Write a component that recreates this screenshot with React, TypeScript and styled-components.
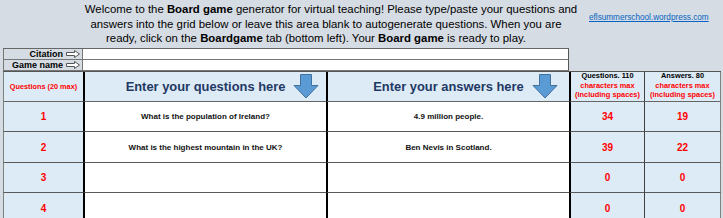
import React from "react";
import styled, { createGlobalStyle } from "styled-components";

const GlobalStyle = createGlobalStyle`
  html, body {
    margin: 0;
    padding: 0;
  }
  body {
    background: #d6dce4;
    font-family: "Liberation Sans", Arial, sans-serif;
    overflow: hidden;
  }
`;

type Row = { n: number; q: string; a: string; qc: number; ac: number };

const rows: Row[] = [
  { n: 1, q: "What is the population of Ireland?", a: "4.9 million people.", qc: 34, ac: 19 },
  { n: 2, q: "What is the highest mountain in the UK?", a: "Ben Nevis in Scotland.", qc: 39, ac: 22 },
  { n: 3, q: "", a: "", qc: 0, ac: 0 },
  { n: 4, q: "", a: "", qc: 0, ac: 0 },
];

const RightArrow = () => (
  <svg width="14" height="8" viewBox="0 0 14 8">
    <path d="M0.5 2.5 H8.5 V0.5 L13.5 4 L8.5 7.5 V5.5 H0.5 Z" fill="#ffffff" stroke="#555" strokeWidth="1" />
  </svg>
);

const DownArrow = () => (
  <svg width="26" height="25" viewBox="0 0 26 25">
    <path d="M7.5 0.5 H18.5 V11.5 H25 L13 24 L1 11.5 H7.5 Z" fill="#5b9bd5" stroke="#41719c" strokeWidth="1" />
  </svg>
);

const App = () => {
  return (
    <Page>
      <GlobalStyle />
      <Intro>
        <Message>
          <Line $shift={5}>
            Welcome to the&nbsp;<b>Board game</b>&nbsp;generator for virtual teaching! Please type/paste your questions and
          </Line>
          <Line>answers into the grid below or leave this area blank to autogenerate questions. When you are</Line>
          <Line $shift={-10}>
            ready, click on the&nbsp;<b>Boardgame</b>&nbsp;tab (bottom left). Your&nbsp;<b>Board game</b>&nbsp;is ready to play.
          </Line>
        </Message>
        <SiteLink href="#">eflsummerschool.wordpress.com</SiteLink>
      </Intro>

      <Meta>
        <MetaLabel>
          Citation <RightArrow />
        </MetaLabel>
        <MetaInput />
        <MetaLabel>
          Game name <RightArrow />
        </MetaLabel>
        <MetaInput />
      </Meta>

      <Grid>
        <HeadCell $col={1}>
          <SmallRed>Questions (20 max)</SmallRed>
        </HeadCell>
        <HeadCell $col={2}>
          <Title>Enter your questions here</Title>
          <ArrowSpot $right={7}>
            <DownArrow />
          </ArrowSpot>
        </HeadCell>
        <HeadCell $col={3}>
          <Title>Enter your answers here</Title>
          <ArrowSpot $right={11}>
            <DownArrow />
          </ArrowSpot>
        </HeadCell>
        <HeadCell $col={4}>
          <CountHead>
            <b>Questions. 110</b>
            <Red>characters max</Red>
            <Red>(including spaces)</Red>
          </CountHead>
        </HeadCell>
        <HeadCell $col={5}>
          <CountHead>
            <b>Answers. 80</b>
            <Red>characters max</Red>
            <Red>(including spaces)</Red>
          </CountHead>
        </HeadCell>

        {rows.map((r, i) => (
          <React.Fragment key={r.n}>
            <Cell $col={1} $tall={i % 2 === 1}>
              <Num>{r.n}</Num>
            </Cell>
            <Cell $col={2} $tall={i % 2 === 1}>
              <Entry>{r.q}</Entry>
            </Cell>
            <Cell $col={3} $tall={i % 2 === 1}>
              <Entry>{r.a}</Entry>
            </Cell>
            <Cell $col={4} $tall={i % 2 === 1}>
              <Num>{r.qc}</Num>
            </Cell>
            <Cell $col={5} $tall={i % 2 === 1}>
              <Num>{r.ac}</Num>
            </Cell>
          </React.Fragment>
        ))}
      </Grid>
    </Page>
  );
};

export default App;

// =================================================================

const Page = styled.div`
  width: 723px;
  height: 218px;
  overflow: hidden;
  background: #d6dce4;
`;

const Intro = styled.div`
  display: grid;
  grid-template-columns: 83px 486px 1fr;
  height: 48px;
`;

const Message = styled.div`
  grid-column: 2;
  padding-top: 2px;
  font-size: 11.4px;
  line-height: 14.7px;
  color: #000;
`;

// shift moves the centre of a line sideways, as the sheet's own wrapping does
const Line = styled.div<{ $shift?: number }>`
  display: flex;
  justify-content: center;
  white-space: nowrap;
  padding-left: ${(p) => Math.max(0, (p.$shift ?? 0) * 2)}px;
  padding-right: ${(p) => Math.max(0, -(p.$shift ?? 0) * 2)}px;
`;

const SiteLink = styled.a`
  grid-column: 3;
  align-self: start;
  justify-self: start;
  margin: 13px 0 0 20px;
  font-size: 8.2px;
  color: #0563c1;
  text-decoration: underline;
`;

const Meta = styled.div`
  display: grid;
  grid-template-columns: 80px 486px;
  grid-auto-rows: 11px;
  width: 566px;
  margin-left: 3px;
  border-top: 1px solid #666;
  box-sizing: border-box;
`;

const MetaLabel = styled.div`
  display: flex;
  align-items: center;
  justify-content: flex-end;
  gap: 3px;
  padding-right: 2px;
  box-sizing: border-box;
  border-left: 1px solid #777;
  border-right: 1px solid #777;
  border-bottom: 1px solid #777;
  font-size: 9px;
  font-weight: bold;
  color: #000;
  line-height: 1;
`;

const MetaInput = styled.div`
  background: #fff;
  box-sizing: border-box;
  border-right: 1px solid #555;
  border-bottom: 1px solid #777;
`;

const Grid = styled.div`
  display: grid;
  grid-template-columns: 80px 243px 243px 75px 77px;
  margin-left: 3px;
  border-top: 1px solid #555;
  width: 718px;
`;

const colBorder = (col: number) => {
  switch (col) {
    case 1:
      return "border-left: 1px solid #808080;";
    case 5:
      return "border-left: 1px solid #404040; border-right: 1px solid #808080;";
    default:
      return "border-left: 2px solid #000;";
  }
};

const HeadCell = styled.div<{ $col: number }>`
  position: relative;
  display: flex;
  align-items: center;
  justify-content: center;
  height: 30px;
  box-sizing: border-box;
  background: #ddebf7;
  border-bottom: 1px solid #666;
  ${(p) => colBorder(p.$col)}
`;

const Cell = styled.div<{ $col: number; $tall?: boolean }>`
  display: flex;
  align-items: center;
  justify-content: center;
  height: ${(p) => (p.$tall ? 31 : 30)}px;
  box-sizing: border-box;
  background: ${(p) => (p.$col === 2 || p.$col === 3 ? "#ffffff" : "#ddebf7")};
  border-bottom: 1px solid #595959;
  ${(p) => colBorder(p.$col)}
`;

const SmallRed = styled.span`
  font-size: 7.3px;
  font-weight: bold;
  color: #ff0000;
  white-space: nowrap;
`;

const Title = styled.span`
  font-size: 12.9px;
  font-weight: bold;
  color: #1f3864;
  white-space: nowrap;
`;

const ArrowSpot = styled.span<{ $right: number }>`
  position: absolute;
  top: 2px;
  right: ${(p) => p.$right}px;
  display: flex;
`;

const CountHead = styled.div`
  display: flex;
  flex-direction: column;
  align-items: center;
  padding-bottom: 2px;
  font-size: 7.4px;
  line-height: 9.5px;
  font-weight: bold;
  color: #000;
  white-space: nowrap;
`;

const Red = styled.span`
  color: #ff0000;
`;

const Num = styled.span`
  font-size: 10px;
  font-weight: bold;
  color: #ff0000;
`;

const Entry = styled.span`
  font-size: 8px;
  font-weight: bold;
  color: #111;
  white-space: nowrap;
`;
